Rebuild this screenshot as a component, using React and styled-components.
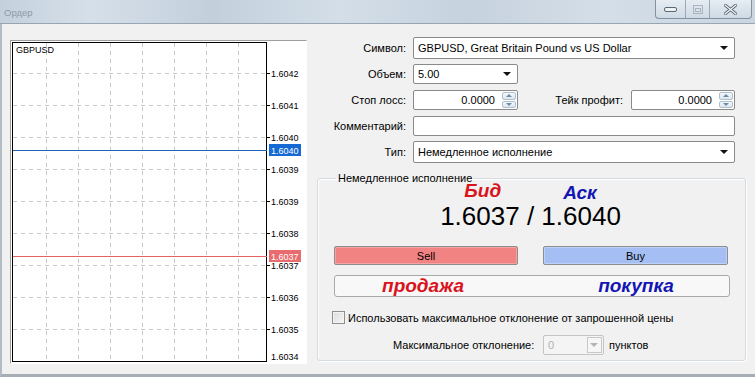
import React from "react";
import styled, { createGlobalStyle } from "styled-components";

const GlobalStyle = createGlobalStyle`
  html, body {
    margin: 0;
    padding: 0;
    width: 755px;
    height: 377px;
    overflow: hidden;
    background: #f1f1f1;
  }
  body {
    font-family: "Liberation Sans", Arial, sans-serif;
    font-size: 11px;
    color: #000;
  }
`;

const Window = styled.div`
  width: 755px;
  height: 377px;
  box-sizing: border-box;
  display: flex;
  flex-direction: column;
  background: #f1f1f1;
`;

const TitleBar = styled.div`
  height: 24px;
  flex: none;
  box-sizing: border-box;
  display: flex;
  align-items: flex-start;
  justify-content: space-between;
  border-bottom: 1px solid #97a6b5;
  background: linear-gradient(
    90deg,
    #c4d1dd 0%,
    #d5dfe9 12%,
    #c3d0dc 28%,
    #d3dee8 45%,
    #c6d2de 62%,
    #d4dee8 80%,
    #c9d5e0 100%
  );
`;

const Title = styled.span`
  padding: 7px 0 0 4px;
  font-size: 9.5px;
  color: #8d9aa7;
`;

const Controls = styled.div`
  display: flex;
  height: 18px;
  margin-right: 3px;
  border: 1px solid #8391a0;
  border-top: none;
  border-radius: 0 0 4px 4px;
  background: linear-gradient(#e6edf3, #cfdae4);
  overflow: hidden;
`;

const ControlButton = styled.div`
  width: ${(p) => p.$w}px;
  display: flex;
  align-items: center;
  justify-content: center;
  & + & {
    border-left: 1px solid #9aa8b6;
  }
`;

const Body = styled.div`
  flex: 1;
  display: flex;
  align-items: flex-start;
  box-sizing: border-box;
  border-left: 2px solid #b3bcc5;
  border-bottom: 3px solid #a6adb4;
  padding: 16px 0 0 8px;
`;

const ChartFrame = styled.div`
  width: 297px;
  height: 324px;
  box-sizing: border-box;
  border: 1px solid;
  border-color: #9d9d9d #ffffff #ffffff #9d9d9d;
  padding: 1px;
  background: #fff;
  flex: none;
`;

const Form = styled.div`
  margin-left: 10px;
  width: 425px;
  display: flex;
  flex-direction: column;
  margin-top: -5px;
`;

const Row = styled.div`
  height: 26px;
  display: flex;
  align-items: center;
`;

const Label = styled.span`
  width: ${(p) => p.$w || 89}px;
  flex: none;
  text-align: right;
  padding-right: ${(p) => p.$pr || 7}px;
  white-space: nowrap;
`;

const Field = styled.div`
  position: relative;
  width: ${(p) => p.$w}px;
  height: ${(p) => p.$h || 20}px;
  box-sizing: border-box;
  border: 1px solid ${(p) => (p.$disabled ? "#c4c4c4" : "#8a8a8a")};
  border-radius: 2px;
  background: ${(p) => (p.$disabled ? "#f4f4f4" : "#fff")};
  color: ${(p) => (p.$disabled ? "#b0b0b0" : "#000")};
  display: flex;
  align-items: center;
  justify-content: ${(p) => (p.$right ? "flex-end" : "flex-start")};
  padding: 0 ${(p) => (p.$right ? 22 : 3)}px 0 4px;
  white-space: nowrap;
`;

const Arrow = styled.span`
  position: absolute;
  right: ${(p) => p.$r || 6}px;
  top: 50%;
  margin-top: -2px;
  width: 0;
  height: 0;
  border-left: 4px solid transparent;
  border-right: 4px solid transparent;
  border-top: 4px solid ${(p) => p.$c || "#111"};
`;

const ArrowBox = styled.span`
  position: absolute;
  right: 1px;
  top: 1px;
  bottom: 1px;
  width: 15px;
  border: 1px solid #c8c8c8;
  box-sizing: border-box;
  background: #f6f6f6;
`;

const Spin = styled.span`
  position: absolute;
  right: 1px;
  top: 1px;
  bottom: 1px;
  width: 14px;
  display: flex;
  flex-direction: column;
  gap: 1px;
`;

const SpinHalf = styled.span`
  flex: 1;
  box-sizing: border-box;
  border: 1px solid #aebfcf;
  border-radius: 2px;
  background: linear-gradient(#f4f7fa, #dde6ee);
  display: flex;
  align-items: center;
  justify-content: center;
  &::after {
    content: "";
    width: 0;
    height: 0;
    border-left: 3px solid transparent;
    border-right: 3px solid transparent;
    ${(p) =>
      p.$up
        ? "border-bottom: 3px solid #6d8aa6;"
        : "border-top: 3px solid #6d8aa6;"}
  }
`;

const Group = styled.fieldset`
  margin: 7px 0 0 0;
  padding: 0 15px 0 15px;
  height: 189px;
  box-sizing: border-box;
  border: 1px solid #d3dbe1;
  border-radius: 3px;
  box-shadow: inset 1px 1px 0 #fff, 1px 1px 0 #fff;
  display: flex;
  flex-direction: column;
`;

const Legend = styled.legend`
  padding: 0 2px;
  margin-left: 3px;
  font-size: 11px;
`;

const QuoteNames = styled.div`
  display: flex;
  justify-content: center;
  gap: 62px;
  margin-top: -3px;
  padding-right: 2px;
  height: 21px;
`;

const Accent = styled.span`
  font-family: "Liberation Sans", Arial, sans-serif;
  font-weight: bold;
  font-style: italic;
  font-size: 19px;
  line-height: 19px;
  color: ${(p) => (p.$tone === "red" ? "#d9141c" : "#1416b4")};
  margin-top: ${(p) => p.$dy || 0}px;
`;

const Price = styled.div`
  text-align: center;
  font-size: 26px;
  line-height: 24px;
  margin-top: 2px;
  padding-right: 2px;
`;

const Pair = styled.div`
  display: grid;
  grid-template-columns: 184px 185px;
  column-gap: 25px;
  margin-left: 1px;
`;

const ButtonPair = styled(Pair)`
  margin-top: 18px;
`;

const TradeButton = styled.div`
  height: 19px;
  box-sizing: border-box;
  border: 1px solid #8d8d8d;
  border-radius: 2px;
  background: ${(p) => (p.$kind === "sell" ? "#f28383" : "#a5bff4")};
  box-shadow: inset 0 0 0 1px ${(p) => (p.$kind === "sell" ? "#f7a3a3" : "#bcd0f8")};
  display: flex;
  align-items: center;
  justify-content: center;
  font-size: 11px;
`;

const NoteBox = styled.div`
  margin: 10px 0 0 1px;
  height: 22px;
  box-sizing: border-box;
  border: 1px solid #a9a9a9;
  border-radius: 3px;
  background: #f8f8f8;
  display: grid;
  grid-template-columns: 184px 185px;
  column-gap: 25px;
  align-items: center;
`;

const NoteText = styled(Accent)`
  text-align: center;
  margin-top: -2px;
  margin-left: ${(p) => (p.$tone === "red" ? -8 : -1)}px;
`;

const CheckRow = styled.label`
  display: flex;
  align-items: center;
  gap: 3px;
  margin-top: 14px;
  margin-left: -1px;
  height: 13px;
`;

const CheckBox = styled.span`
  width: 13px;
  height: 13px;
  box-sizing: border-box;
  border: 1px solid #8e8f8f;
  background: linear-gradient(135deg, #dcdcdc, #f6f6f6);
  box-shadow: inset 0 0 0 1px #f4f4f4;
`;

const DeviationRow = styled.div`
  display: flex;
  align-items: center;
  margin-top: 11px;
  height: 20px;
  padding-left: 60px;
`;

const Units = styled.span`
  margin-left: 5px;
`;

const gridX = [34.5, 66.5, 98.5, 130.5, 162.5, 194.5, 226.5];
const levels = [
  ["1.6042", 31],
  ["1.6041", 63],
  ["1.6040", 95],
  ["1.6039", 127],
  ["1.6039", 159],
  ["1.6038", 191],
  ["1.6037", 223],
  ["1.6036", 255],
  ["1.6035", 287],
];
const axisFont = "Liberation Sans, Arial, sans-serif";

function Chart() {
  return (
    <svg width="293" height="320" viewBox="0 0 293 320" style={{ display: "block" }}>
      <rect x="0" y="0" width="293" height="320" fill="#fff" />
      {gridX.map((x) => (
        <line key={x} x1={x} y1="1" x2={x} y2="319" stroke="#c8c8c8" strokeDasharray="4 4" />
      ))}
      {levels.map(([, y]) => (
        <line key={y} x1="1" y1={y + 0.5} x2="254" y2={y + 0.5} stroke="#c8c8c8" strokeDasharray="4 4" />
      ))}
      <rect x="0.5" y="0.5" width="254" height="319" fill="none" stroke="#000" />
      {levels.map(([t, y]) => (
        <g key={"t" + y}>
          <line x1="255" y1={y + 0.5} x2="258" y2={y + 0.5} stroke="#000" />
          <text x="259" y={y + 4} fontSize="9" fontFamily={axisFont} fill="#000">
            {t}
          </text>
        </g>
      ))}
      <text x="259" y="318" fontSize="9" fontFamily={axisFont} fill="#000">
        1.6034
      </text>
      <text x="4" y="11" fontSize="9" fontFamily={axisFont} fill="#000">
        GBPUSD
      </text>
      <line x1="1" y1="108.5" x2="255" y2="108.5" stroke="#1c64b4" />
      <rect x="257" y="102" width="32" height="12" fill="#1469d4" />
      <text x="259" y="111.5" fontSize="9" fontFamily={axisFont} fill="#fff">
        1.6040
      </text>
      <line x1="1" y1="214.5" x2="255" y2="214.5" stroke="#e46464" />
      <rect x="257" y="208" width="32" height="12" fill="#e86b6e" />
      <text x="259" y="217.5" fontSize="9" fontFamily={axisFont} fill="#fff">
        1.6037
      </text>
    </svg>
  );
}

function Select({ w, h, children }) {
  return (
    <Field $w={w} $h={h}>
      {children}
      <Arrow />
    </Field>
  );
}

function SpinInput({ w, children }) {
  return (
    <Field $w={w} $right>
      {children}
      <Spin>
        <SpinHalf $up />
        <SpinHalf />
      </Spin>
    </Field>
  );
}

export default function App() {
  return (
    <>
      <GlobalStyle />
      <Window>
        <TitleBar>
          <Title>Ордер</Title>
          <Controls>
            <ControlButton $w={29}>
              <svg width="13" height="5" viewBox="0 0 13 5">
                <rect x="0.5" y="0.5" width="12" height="4" rx="1.5" fill="#eef2f5" stroke="#5b6773" />
              </svg>
            </ControlButton>
            <ControlButton $w={23}>
              <svg width="10" height="9" viewBox="0 0 10 9">
                <rect x="0.5" y="0.5" width="9" height="8" fill="none" stroke="#a9b4bf" />
                <rect x="2.5" y="3.5" width="5" height="3" fill="none" stroke="#a9b4bf" />
              </svg>
            </ControlButton>
            <ControlButton $w={41}>
              <svg width="13" height="11" viewBox="0 0 13 11">
                <path d="M1 1 L12 10 M12 1 L1 10" stroke="#5b6773" strokeWidth="3" strokeLinecap="round" />
                <path d="M1 1 L12 10 M12 1 L1 10" stroke="#f2f5f8" strokeWidth="1.2" strokeLinecap="round" />
              </svg>
            </ControlButton>
          </Controls>
        </TitleBar>
        <Body>
          <ChartFrame>
            <Chart />
          </ChartFrame>
          <Form>
            <Row>
              <Label>Символ:</Label>
              <Select w={322} h={22}>GBPUSD, Great Britain Pound vs US Dollar</Select>
            </Row>
            <Row>
              <Label>Объем:</Label>
              <Select w={105}>5.00</Select>
            </Row>
            <Row>
              <Label>Стоп лосс:</Label>
              <SpinInput w={105}>0.0000</SpinInput>
              <Label $w={105} $pr={8}>Тейк профит:</Label>
              <SpinInput w={104}>0.0000</SpinInput>
            </Row>
            <Row>
              <Label>Комментарий:</Label>
              <Field $w={322} />
            </Row>
            <Row>
              <Label>Тип:</Label>
              <Select w={322} h={22}>Немедленное исполнение</Select>
            </Row>
            <Group>
              <Legend>Немедленное исполнение</Legend>
              <QuoteNames>
                <Accent $tone="red">Бид</Accent>
                <Accent $tone="blue" $dy={2}>Аск</Accent>
              </QuoteNames>
              <Price>1.6037 / 1.6040</Price>
              <ButtonPair>
                <TradeButton $kind="sell">Sell</TradeButton>
                <TradeButton $kind="buy">Buy</TradeButton>
              </ButtonPair>
              <NoteBox>
                <NoteText $tone="red">продажа</NoteText>
                <NoteText $tone="blue">покупка</NoteText>
              </NoteBox>
              <CheckRow>
                <CheckBox />
                Использовать максимальное отклонение от запрошенной цены
              </CheckRow>
              <DeviationRow>
                <Label $w={140} $pr={10}>Максимальное отклонение:</Label>
                <Field $w={61} $disabled>
                  0
                  <ArrowBox />
                  <Arrow $r={5} $c="#b4b4b4" />
                </Field>
                <Units>пунктов</Units>
              </DeviationRow>
            </Group>
          </Form>
        </Body>
      </Window>
    </>
  );
}
